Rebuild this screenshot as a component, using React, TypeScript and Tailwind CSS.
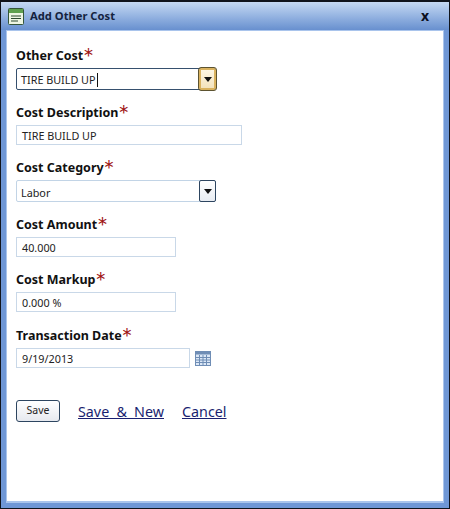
const font = { fontFamily: '"Noto Sans", sans-serif' };

function Label({ text, className = "" }: { text: string; className?: string }) {
  return (
    <div className={`h-5 flex items-center text-[12.5px] font-bold text-[#111] leading-none ${className}`}>
      <span>{text}</span>
      <span className="text-[#a01414] font-light text-[21px] leading-none font-['Inter',sans-serif] self-start">*</span>
    </div>
  );
}

function TextBox({ value, w }: { value: string; w: string }) {
  return (
    <div className={`${w} h-5 mt-[2px] border border-[#c9d8e8] bg-white flex items-center pl-[5px] pt-[2px] text-[10.8px] text-[#222]`}>
      {value}
    </div>
  );
}

function Arrow() {
  return (
    <svg width="8" height="5" viewBox="0 0 8 5"><path d="M0 0h8L4 5z" fill="#111" /></svg>
  );
}

function Combo({ value, active }: { value: string; active?: boolean }) {
  return (
    <div className={`w-[200px] h-[22px] mt-[2px] flex rounded-[2px] border ${active ? "border-[#36506e]" : "border-[#c2d4e6]"} bg-white`}>
      <div className={`flex-1 flex items-center pl-[4px] ${active ? "pt-[3px]" : "pt-[4px]"} text-[10.8px] text-[#222]`}>
        {value}
        {active && <span className="w-px h-[14px] bg-[#111] ml-[1px] -mt-[2px]" />}
      </div>
      <div className={`w-[17px] -my-px -mr-px flex items-center justify-center rounded-[2px] ${active ? "border-2 border-[#d9b25f] bg-gradient-to-b from-[#fdf6e3] to-[#f3e3bd] outline outline-1 outline-[#5d5330]" : "border border-[#2d4560] bg-gradient-to-b from-white to-[#e8ecf2]"}`}>
        <Arrow />
      </div>
    </div>
  );
}

export default function App() {
  return (
    <div className="w-[450px] h-[509px] bg-[#6f97d6] border border-[#10141c] border-t-2 flex flex-col overflow-hidden" style={font}>
      <div className="h-[28px] shrink-0 flex items-center bg-gradient-to-b from-[#c5d9f3] to-[#6890cf] pl-[7px] pr-[20px]">
        <svg width="16" height="17" viewBox="0 0 16 17" className="shrink-0">
          <rect x="0.5" y="0.5" width="15" height="16" rx="1" fill="#eef6e2" stroke="#35563a" />
          <rect x="1" y="1" width="14" height="4" fill="#5fa04e" />
          <path d="M3 8h10M3 10.5h10M3 13h7" stroke="#2e4a30" strokeWidth="1" />
        </svg>
        <span className="ml-[6px] text-[11.2px] font-bold text-[#14233f]">Add Other Cost</span>
        <span className="ml-auto text-[14px] font-bold text-[#0b0f1e] leading-none">x</span>
      </div>
      <div className="flex-1 mx-[5px] mb-[5px] border border-[#a9c4ec] border-b-2 bg-white pl-[9px] pt-[15px]">
        <Label text="Other Cost" />
        <Combo value="TIRE BUILD UP" active />
        <Label text="Cost Description" className="mt-[13px]" />
        <TextBox value="TIRE BUILD UP" w="w-[226px]" />
        <Label text="Cost Category" className="mt-[13px]" />
        <Combo value="Labor" />
        <Label text="Cost Amount" className="mt-[13px]" />
        <TextBox value="40.000" w="w-[160px]" />
        <Label text="Cost Markup" className="mt-[13px]" />
        <TextBox value="0.000 %" w="w-[160px]" />
        <Label text="Transaction Date" className="mt-[14px]" />
        <div className="flex items-center mt-[2px]">
          <div className="w-[174px] h-5 border border-[#c9d8e8] flex items-center pl-[5px] pt-[3px] text-[10.8px] text-[#222]">9/19/2013</div>
          <svg width="16" height="15" viewBox="0 0 16 15" className="ml-[5px]">
            <rect x="0.5" y="0.5" width="15" height="14" fill="#dbe7f6" stroke="#6f8db5" />
            <rect x="1" y="1" width="14" height="2.5" fill="#6f8db5" />
            <path d="M1 6.5h14M1 9h14M1 11.5h14M4.5 4v10M8 4v10M11.5 4v10" stroke="#6f8db5" strokeWidth="1" />
          </svg>
        </div>
        <div className="flex items-center mt-[31px]">
          <button className="w-[44px] h-[22px] rounded-[3px] border border-[#2d4560] bg-gradient-to-b from-white to-[#e6e9ef] text-[10.5px] text-[#222]">Save</button>
          <a className="ml-[18px] mt-[2px] text-[14.3px] [word-spacing:3.5px] text-[#1a1f70] underline">Save &amp; New</a>
          <a className="ml-[18px] mt-[2px] text-[14.3px] text-[#1a1f70] underline">Cancel</a>
        </div>
      </div>
    </div>
  );
}
